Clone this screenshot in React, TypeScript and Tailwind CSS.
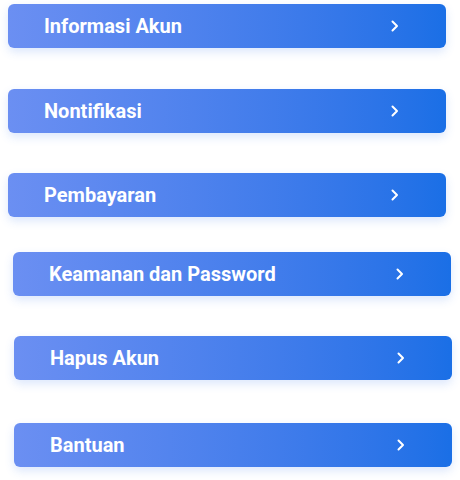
const items = [
  { label: "Informasi Akun", cls: "mt-[4px] ml-[8px]" },
  { label: "Nontifikasi", cls: "mt-[41px] ml-[8px]" },
  { label: "Pembayaran", cls: "mt-[40px] ml-[8px]" },
  { label: "Keamanan dan Password", cls: "mt-[35px] ml-[13px]" },
  { label: "Hapus Akun", cls: "mt-[40px] ml-[14px]" },
  { label: "Bantuan", cls: "mt-[43px] ml-[14px]" },
];

function Chevron() {
  return (
    <svg width="8" height="12" viewBox="0 0 8 12" fill="none">
      <path d="M1.5 1.5 L6 6 L1.5 10.5" stroke="white" strokeWidth="2" strokeLinecap="round" strokeLinejoin="round" />
    </svg>
  );
}

export default function App() {
  return (
    <div className="w-[460px] h-[480px] bg-white flex flex-col font-['Roboto',sans-serif]">
      {items.map((item) => (
        <div
          key={item.label}
          className={`${item.cls} w-[438px] h-[44px] shrink-0 rounded-[6px] bg-linear-to-r from-[#6b8ff2] to-[#1a6fe6] shadow-[0_4px_10px_rgba(59,120,240,0.18)] flex items-center justify-between pl-[36px] pr-[47px]`}
        >
          <span className="text-white text-[20px] font-bold leading-none">{item.label}</span>
          <Chevron />
        </div>
      ))}
    </div>
  );
}
